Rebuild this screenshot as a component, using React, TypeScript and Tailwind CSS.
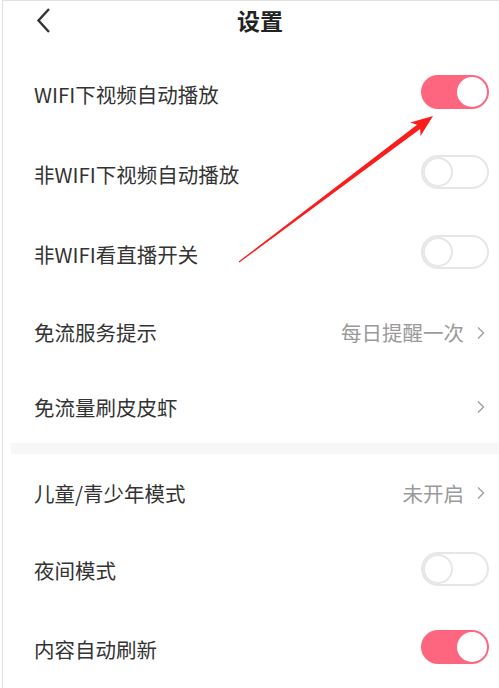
import React from 'react'

const font = { fontFamily: '"Noto Sans CJK SC", "Noto Sans", sans-serif' }

function Toggle({ on }: { on: boolean }) {
  return on ? (
    <div className="w-[68px] h-[34px] rounded-full bg-[#fe6680] p-[2px] flex justify-end">
      <div className="w-[30px] h-[30px] rounded-full bg-white" />
    </div>
  ) : (
    <div className="w-[68px] h-[34px] rounded-full border-2 border-[#e6e6e6] bg-white flex">
      <div className="w-[30px] h-[30px] rounded-full border-2 border-[#e6e6e6] bg-white" />
    </div>
  )
}

function Chevron() {
  return (
    <svg width="10" height="14" viewBox="0 0 10 14" className="ml-[12px]">
      <polyline points="2,1.5 7.5,7 2,12.5" fill="none" stroke="#a0a0a0" strokeWidth="1.4" />
    </svg>
  )
}

function Row({ label, h, right }: { label: string; h: string; right: React.ReactNode }) {
  return (
    <div className={`flex items-center justify-between pl-[31px] ${h}`}>
      <span className="text-[20.5px] text-[#333]">{label}</span>
      {right}
    </div>
  )
}

function Value({ text }: { text?: string }) {
  return (
    <div className="flex items-center pr-[13px]">
      {text && <span className="text-[20.5px] text-[#9a9a9a]">{text}</span>}
      <Chevron />
    </div>
  )
}

function Switch({ on }: { on: boolean }) {
  return (
    <div className="pr-[10px] mb-[4px]">
      <Toggle on={on} />
    </div>
  )
}

function Arrow() {
  // red annotation arrow pointing at the first switch
  const tail = [239, 262]
  const tip = [433, 116]
  const dx = tip[0] - tail[0]
  const dy = tip[1] - tail[1]
  const len = Math.hypot(dx, dy)
  const d = [dx / len, dy / len]
  const n = [-d[1], d[0]]
  const base = [tip[0] - 22 * d[0], tip[1] - 22 * d[1]]
  const neck = [base[0] + 4 * d[0], base[1] + 4 * d[1]]
  const p = (c: number[], k: number) => `${c[0] + k * n[0]},${c[1] + k * n[1]}`
  const pts = [
    p(tail, -0.6),
    p(neck, -2.6),
    p(base, -8.5),
    `${tip[0]},${tip[1]}`,
    p(base, 8.5),
    p(neck, 2.6),
    p(tail, 0.6),
  ].join(' ')
  return (
    <svg className="absolute inset-0 pointer-events-none" width="499" height="688" viewBox="0 0 499 688">
      <polygon points={pts} fill="#fb1c1c" />
    </svg>
  )
}

export default function App() {
  return (
    <div className="relative w-[499px] h-[688px] bg-white overflow-hidden" style={font}>
      <div className="ml-[2px] h-full border-l border-t border-[#e0e0e0]">
        <div className="relative h-[53px] pb-[14px] flex items-center justify-center">
          <svg width="16" height="28" viewBox="0 0 16 28" className="absolute left-[33px] top-[6px]">
            <polyline points="13,2 2.5,13.5 13,25" fill="none" stroke="#333" strokeWidth="2.4" />
          </svg>
          <span className="text-[23px] font-bold text-[#222] ml-[18px]">设置</span>
        </div>

        <Row label="WIFI下视频自动播放" h="h-[80px]" right={<Switch on />} />
        <Row label="非WIFI下视频自动播放" h="h-[80px]" right={<Switch on={false} />} />
        <Row label="非WIFI看直播开关" h="h-[80px]" right={<Switch on={false} />} />
        <Row label="免流服务提示" h="h-[77px]" right={<Value text="每日提醒一次" />} />
        <Row label="免流量刷皮皮虾" h="h-[72px]" right={<Value />} />

        <div className="h-[11px] ml-[8px] bg-[#f7f7f7]" />

        <Row label="儿童/青少年模式" h="h-[78px]" right={<Value text="未开启" />} />
        <Row label="夜间模式" h="h-[77px]" right={<Switch on={false} />} />
        <Row label="内容自动刷新" h="h-[80px]" right={<Switch on />} />
      </div>
      <Arrow />
    </div>
  )
}
